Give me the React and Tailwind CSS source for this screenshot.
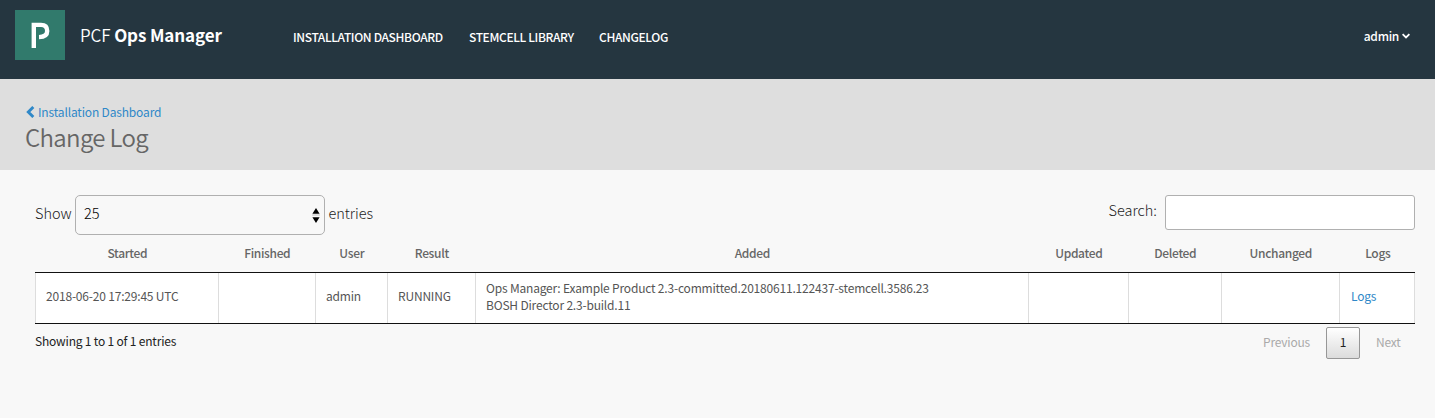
import React from "react";

const NAV = [
  { label: "INSTALLATION DASHBOARD", box: "w-[176px]" },
  { label: "STEMCELL LIBRARY", box: "w-[130px]" },
  { label: "CHANGELOG", box: "w-[90px]" },
];

const HEADINGS = ["Started", "Finished", "User", "Result", "Added", "Updated", "Deleted", "Unchanged", "Logs"];

const COLUMNS = "grid grid-cols-[183px_97px_72px_88px_553px_100px_93px_118px_76px]";

function Header() {
  return (
    <header className="flex h-[79px] shrink-0 bg-[#253640] text-white">
      <div className="mt-[10px] ml-[15px] h-[50px] w-[50px] bg-[#317a6c]">
        <svg width="50" height="50" viewBox="0 0 50 50" fill="none">
          <path d="M18.8 38V14.9H26C30.2 14.9 32.2 17.2 32.2 21C32.2 25 29.6 27 24 27.1" stroke="#fff" strokeWidth="4.4" />
        </svg>
      </div>
      <div className="mt-[21px] ml-[15px] w-[213px] text-[17px] leading-[28px] tracking-[-0.1px] whitespace-nowrap">
        <span className="font-[350]">PCF</span> <span className="font-bold">Ops Manager</span>
      </div>
      <nav className="mt-[27px] flex text-[12px] leading-[20px] font-medium tracking-[-0.37px] whitespace-nowrap">
        {NAV.map((n) => (
          <a key={n.label} className={n.box}>{n.label}</a>
        ))}
      </nav>
      <div className="mt-[26px] mr-[25px] ml-auto flex items-center self-start text-[12px] leading-[20px] font-medium tracking-[-0.3px]">
        admin
        <svg className="ml-[3px]" width="8" height="8" viewBox="0 0 8 8" fill="none" stroke="#fff" strokeWidth="1.8">
          <path d="M.6 2.2L4 5.5L7.4 2.2" />
        </svg>
      </div>
    </header>
  );
}

function Controls() {
  return (
    <div className="flex h-[40px] justify-between text-[14.5px] leading-[20px] font-light text-[#222]">
      <div className="flex items-center">
        <span className="w-[40px] pb-[4px]">Show</span>
        <div className="flex h-[40px] w-[250px] items-center justify-between rounded-[5px] border border-[#b0b0b0] pr-[4px] pl-[8px] text-black">
          <span className="pb-[4px]">25</span>
          <svg className="mt-px" width="8" height="15" viewBox="0 0 8 15" fill="#000">
            <path d="M4 0L7.6 5.7H.4zM4 15L7.6 9.3H.4z" />
            <path d="M0 6.5H8V7.5H0z" fill="#c4c4c4" />
          </svg>
        </div>
        <span className="ml-[3.5px] pb-[4px] tracking-[-0.05px]">entries</span>
      </div>
      <div className="flex h-[35px] items-center">
        <span className="w-[56.5px] pb-[6px]">Search:</span>
        <input className="h-[35px] w-[250px] rounded-[3px] border border-[#b0b0b0] bg-white" />
      </div>
    </div>
  );
}

function ChangeTable() {
  return (
    <div>
      <div className={`${COLUMNS} h-[37px] pt-[8px] pl-[0.8px] text-center text-[12px] leading-[20px] font-medium tracking-[-0.33px] text-[#666]`}>
        {HEADINGS.map((h) => <div key={h}>{h}</div>)}
      </div>
      <div className={`${COLUMNS} h-[52px] border-y border-[#111] bg-white text-[12px] leading-[17px] tracking-[-0.19px] text-[#555] [&>div]:flex [&>div]:items-center [&>div]:border-l [&>div]:border-[#ddd] [&>div]:pb-[5px] [&>div]:pl-[10px] [&>div]:whitespace-nowrap`}>
        <div>2018-06-20 17:29:45 UTC</div>
        <div />
        <div>admin</div>
        <div>RUNNING</div>
        <div className="pb-[4px]!">
          <p>Ops Manager: Example Product 2.3-committed.20180611.122437-stemcell.3586.23<br />BOSH Director 2.3-build.11</p>
        </div>
        <div />
        <div />
        <div />
        <div className="border-r"><a className="ml-px text-[#2f88c8]">Logs</a></div>
      </div>
    </div>
  );
}

function Footer() {
  return (
    <div className="flex justify-between text-[12px] leading-[20px] tracking-[-0.19px] text-[#222]">
      <div className="mt-[7px]">Showing 1 to 1 of 1 entries</div>
      <div className="mt-[3px] flex h-[32px] items-center text-[#aaa]">
        <span className="w-[63px] pb-[2px]">Previous</span>
        <button className="h-[32px] w-[34px] rounded-[2px] border border-[#979797] bg-linear-to-b from-white to-[#dcdcdc] pb-[2px] text-[#222]">1</button>
        <span className="ml-[16px] w-[39px] pb-[2px]">Next</span>
      </div>
    </div>
  );
}

export default function App() {
  return (
    <div className="flex h-[418px] w-[1435px] flex-col overflow-hidden bg-[#f8f8f8] font-['Noto_Sans_CJK_SC',sans-serif]">
      <Header />
      <div className="h-[91px] shrink-0 bg-[#dedede] pt-[23px] pl-[25px]">
        <a className="flex h-[20px] items-center text-[12px] leading-[20px] tracking-[-0.16px] text-[#2f88c8]">
          <svg className="mr-[3px] ml-[1px]" width="9" height="12" viewBox="0 0 9 12" fill="none" stroke="#2f88c8" strokeWidth="2.9">
            <path d="M7.3 1L2.3 6L7.3 11" />
          </svg>
          Installation Dashboard
        </a>
        <h1 className="-mt-px text-[24px] leading-[32px] font-[350] tracking-[-0.66px] text-[#666]">Change Log</h1>
      </div>
      <main className="pt-[25px] pr-[20px] pl-[35px]">
        <Controls />
        <ChangeTable />
        <Footer />
      </main>
    </div>
  );
}
